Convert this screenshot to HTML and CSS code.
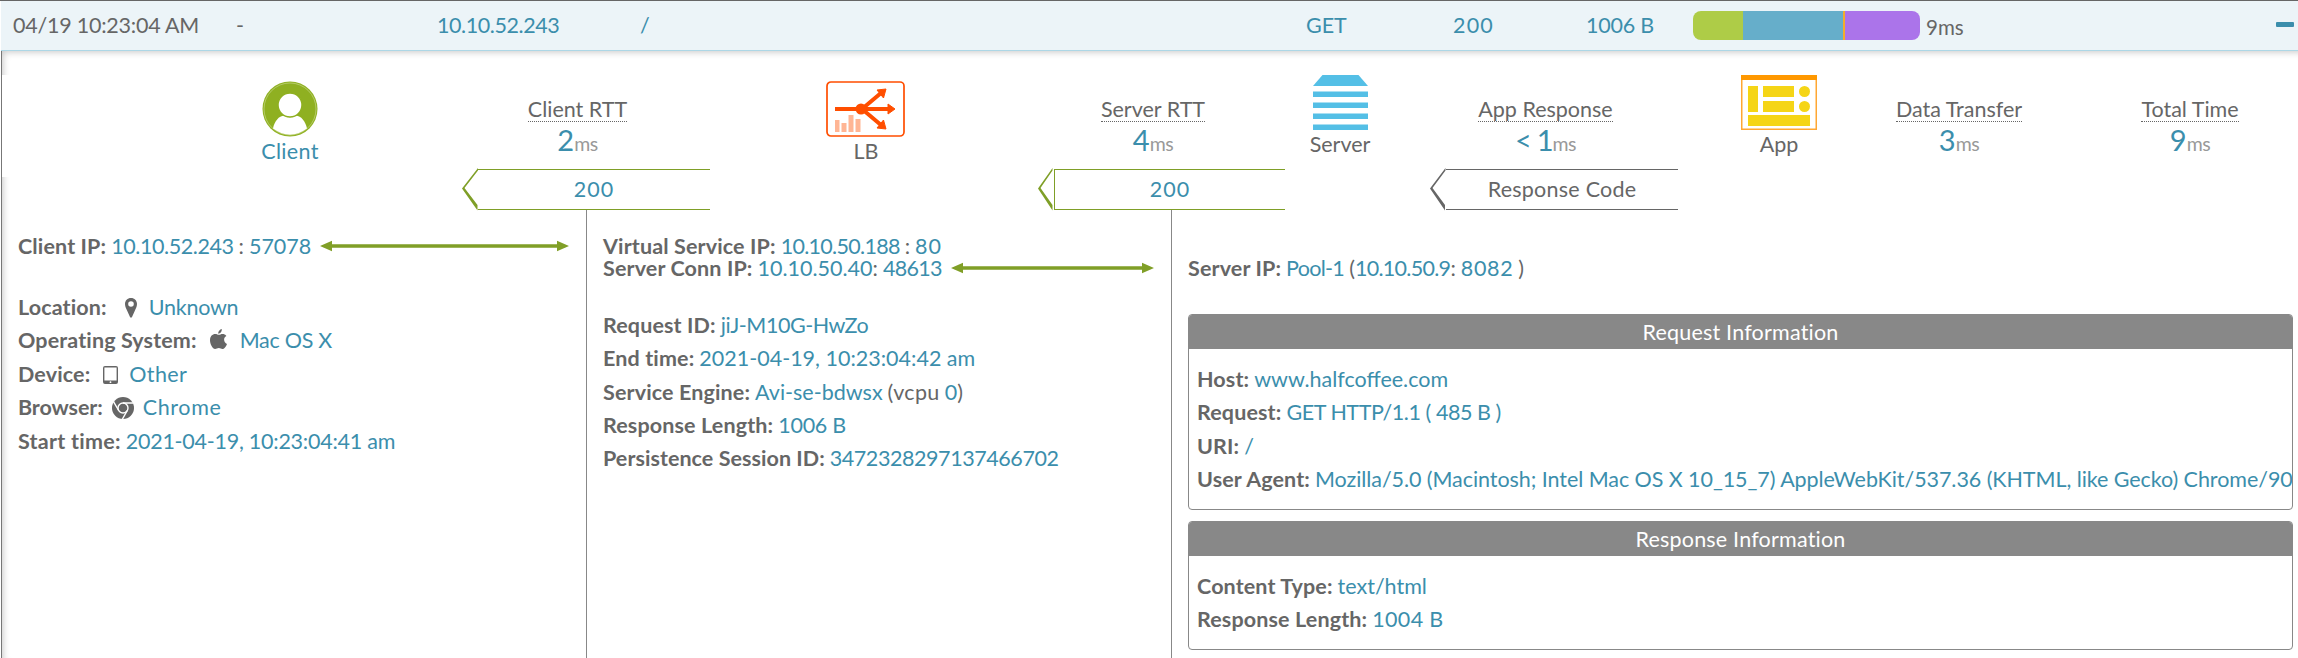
FILE: index.html
```html
<!DOCTYPE html>
<html lang="en">
<head>
<meta charset="utf-8">
<title>Transaction log</title>
<link rel="stylesheet" href="styles.css">
</head>
<body>
<div class="log">
  <header class="row">
    <span class="date">04/19 10:23:04 AM</span>
    <span class="plain">-</span>
    <span class="ip">10.10.52.243</span>
    <span>/</span>
    <span>GET</span>
    <span class="wide">200</span>
    <span class="tight">1006 B</span>
    <span class="timing">
      <span class="bar"><i class="seg client"></i><i class="seg server"></i><i class="seg app"></i><i class="seg data"></i></span>
      <span class="total">9ms</span>
    </span>
    <span class="collapse"></span>
  </header>

  <main class="panel">
    <section class="overview">
      <div class="node low">
        <svg width="56" height="56" viewBox="0 0 56 56"><circle cx="28" cy="28" r="27.5" fill="#8fb021"/><circle cx="28" cy="28" r="26" fill="none" stroke="#c3d584" stroke-width=".7"/><path d="M11 47.5C12.500 40 17 35 22 34.500Q28 38 34 34.500C39 35 43.500 40 45 47.500Q28 60 11 47.500Z" fill="#fff"/><circle cx="28" cy="24" r="12" fill="#fff" stroke="#8fb021" stroke-width="1.500"/></svg>
        <span class="name link wide3">Client</span>
      </div>
      <div class="hop">
        <span class="metric">Client RTT</span>
        <span class="value">2<small>ms</small></span>
        <div class="code"><svg width="16" height="43" viewBox="0 0 16 43"><path d="M16 0L0 20.500L15.500 42.500V37L2.500 20L16 2.500Z"/></svg><b>200</b></div>
      </div>
      <div class="node low lb">
        <svg width="80" height="56" viewBox="0 0 80 56"><rect x="1" y="1" width="77" height="54" rx="4" fill="#fff" stroke="#ff4e00" stroke-width="1.700"/><g fill="#ffb594"><path d="M9 39h4.500v12H9zM15.500 42h5v9h-5zM22.500 34h5v17h-5zM29.500 38h5v13h-5z"/></g><g stroke="#ff4e00" stroke-width="4" fill="none"><path d="M9 28h54M36 28L55 12M36 28L55 44"/></g><circle cx="35" cy="28" r="5.500" fill="#ff4e00"/><path d="M62 23L69 28L62 33ZM51 9L60 8L57.500 17ZM51 47L60 48L57.500 39Z" fill="#ff4e00" stroke="#ff4e00"/></svg>
        <span class="name">LB</span>
      </div>
      <div class="hop">
        <span class="metric">Server RTT</span>
        <span class="value">4<small>ms</small></span>
        <div class="code closed"><svg width="16" height="43" viewBox="0 0 16 43"><path d="M14.500 0L0 20.500L14.500 42.500V37L2.500 20L14.500 2.500Z"/></svg><b>200</b></div>
      </div>
      <div class="node server-node">
        <svg width="55" height="55" viewBox="0 0 55 55" fill="#54bfe6"><path d="M9.500 0h36L55 11H0z"/><path d="M0 16.500h55V22H0zM0 27.500h55V33H0zM0 38.500h55V44H0zM0 49.500h55V55H0z"/></svg>
        <span class="name">Server</span>
      </div>
      <div class="hop gray">
        <span class="metric">App Response</span>
        <span class="value app-time">&lt; 1<small>ms</small></span>
        <div class="code"><svg width="16" height="43" viewBox="0 0 16 43"><path d="M15.500 0L0 20.500L15 42.500V37L2.500 20L15.500 2.500Z"/></svg><b>Response Code</b></div>
      </div>
      <div class="node">
        <svg width="76" height="55" viewBox="0 0 76 55"><path d="M.75 0v54.250h74.500V0" fill="#fff" stroke="#ffa733" stroke-width="1.500"/><path d="M0 0h76v5H0z" fill="#ff9800"/><g fill="#f5d516"><path d="M7 11h10v26H7zM22 11h31v11H22zM22 26h31v11H22zM7 40h62v11H7z"/><circle cx="63.500" cy="16.500" r="5.500"/><circle cx="63.500" cy="31.500" r="5.500"/></g></svg>
        <span class="name">App</span>
      </div>
      <div class="hop plain-hop">
        <span class="metric">Data Transfer</span>
        <span class="value">3<small>ms</small></span>
      </div>
      <div class="hop plain-hop">
        <span class="metric">Total Time</span>
        <span class="value">9<small>ms</small></span>
      </div>
    </section>

    <section class="details">
      <div class="col">
        <p class="addr"><b>Client IP:</b><a class="ip">10.10.52.243</a><span>:</span><a>57078</a>
          <svg class="arrow" width="249" height="12" viewBox="0 0 249 12"><path d="M0 6L12 .800V4.200H237V.800L249 6L237 11.200V7.800H12V11.200Z"/></svg></p>
        <div class="fields first">
          <p><b>Location:</b><svg class="pin" width="12" height="20" viewBox="0 0 12 20"><path fill-rule="evenodd" d="M6 0C2.500 0 0 2.600 0 6C0 9 1.300 10.500 2.500 13.500L5 19Q6 20.500 7 19L9.500 13.500C10.700 10.500 12 9 12 6C12 2.600 9.500 0 6 0ZM6 3.200A2.800 2.800 0 1 1 6 8.800A2.800 2.800 0 1 1 6 3.200Z"/></svg><a class="tight">Unknown</a></p>
          <p><b>Operating System:</b><svg class="apple" width="17" height="20" viewBox="0 0 17 20"><path d="M11.800 0C12 2.600 10.200 4.700 8.200 4.700C8 2.400 9.800.400 11.800 0ZM14.100 10.600C14.100 8.600 15.400 7.500 16.400 6.900C15.400 5.500 13.900 5 12.600 5C11 5 9.900 5.800 8.900 5.800C8 5.800 6.700 5 5.200 5C2.500 5 0 7.200 0 11.200C0 15 2.600 20 5.100 20C6.500 20 7.200 19 8.900 19C10.500 19 11.100 20 12.500 20C14.500 20 16.200 17.200 17 15C15.300 14.300 14.100 12.700 14.100 10.600Z"/></svg><a class="tight">Mac OS X</a></p>
          <p><b>Device:</b><svg class="tablet" width="15" height="18" viewBox="0 0 15 18"><path fill-rule="evenodd" d="M2 0H13Q15 0 15 2V16Q15 18 13 18H2Q0 18 0 16V2Q0 0 2 0ZM1.400 1.600V14.500H13.600V1.600ZM7.500 15.300A.900.900 0 1 0 7.500 17.100A.900.900 0 1 0 7.500 15.300Z"/></svg><a class="wide3">Other</a></p>
          <p><b class="tight">Browser:</b><svg class="chrome" width="22" height="22" viewBox="0 0 22 22"><circle cx="11" cy="11" r="11"/><g fill="none" stroke="#fff" stroke-width="1.400"><circle cx="11" cy="11" r="5"/><path d="M11 6H21.500M6.700 13.500L1.500 4.700M15.300 13.500L10.200 22.500"/></g></svg><a class="wide5">Chrome</a></p>
          <p><b class="start">Start time:</b><a class="tight">2021-04-19, 10:23:04:41 am</a></p>
        </div>
      </div>
      <div class="col">
        <p class="addr"><b>Virtual Service IP:</b><a class="ip6">10.10.50.188</a><span>:</span><a class="pair">80</a></p>
        <p class="addr"><b>Server Conn IP:</b><a>10.10.50.40</a><span class="stick">:</span><a class="ip6">48613</a>
          <svg class="arrow" width="203" height="12" viewBox="0 0 203 12"><path d="M0 6L12 .800V4.200H191V.800L203 6L191 11.200V7.800H12V11.200Z"/></svg></p>
        <div class="fields second">
          <p><b>Request ID:</b><a class="ip">jiJ-M10G-HwZo</a></p>
          <p><b>End time:</b><a>2021-04-19, 10:23:04:42 am</a></p>
          <p><b>Service Engine:</b><a>Avi-se-bdwsx</a><span class="wide3">(vcpu</span><a>0</a><span class="close">)</span></p>
          <p><b>Response Length:</b><a class="tight">1006 B</a></p>
          <p><b class="session">Persistence Session ID:</b><a class="ip">3472328297137466702</a></p>
        </div>
      </div>
      <div class="col last">
        <p class="addr pool"><b>Server IP:</b><a class="ip6">Pool-1</a><span>(</span><a class="ip6 close">10.10.50.9</a><span class="close">:</span><a class="wide5">8082</a><span>)</span></p>
        <article class="box request">
          <h2>Request Information</h2>
          <p><b>Host:</b><a>www.halfcoffee.com</a></p>
          <p><b>Request:</b><a class="ip">GET HTTP/1.1 ( 485 B )</a></p>
          <p><b>URI:</b><a>/</a></p>
          <p><b>User Agent:</b><a class="agent">Mozilla/5.0 (Macintosh; Intel Mac OS X 10_15_7) AppleWebKit/537.36 (KHTML, like Gecko) Chrome/90</a></p>
        </article>
        <article class="box response">
          <h2>Response Information</h2>
          <p><b>Content Type:</b><a>text/html</a></p>
          <p><b>Response Length:</b><a class="wide3">1004 B</a></p>
        </article>
      </div>
    </section>
  </main>
</div>
</body>
</html>
```
FILE: styles.css
```css
* { box-sizing: border-box; }
body {
  margin: 0;
  background: #fff;
  color: #666;
  font: 21.5px/22px Lato, "Open Sans", sans-serif;
}
p, h2 { margin: 0; }
svg { display: block; flex: none; }
a { color: #3b8eac; }

.log {
  width: 2298px;
  height: 658px;
  overflow: hidden;
  border-top: 1px solid #666;
}

/* letter spacing steps */
.ip { letter-spacing: -.43px; }
.ip6 { letter-spacing: -.7px; }
.tight { letter-spacing: -.25px; }
.wide3 { letter-spacing: .35px; }
.wide5 { letter-spacing: .65px; }
.wide { letter-spacing: 1.2px; }
.pair { letter-spacing: .8px; }

/* summary row */
.row {
  position: relative;
  z-index: 1;
  display: grid;
  grid-template-columns: 223px 201px 203px 666px 147px 133px 107px 583px 18px;
  align-items: center;
  height: 50px;
  margin-left: 1px;
  padding: 0 0 2px 12px;
  background: #ecf4f8;
  border-bottom: 1px solid #add7e6;
  color: #3b8eac;
}
.date { color: #666; letter-spacing: -.23px; }
.plain { color: #666; }
.timing { display: flex; align-items: center; gap: 6px; padding-top: 2px; color: #666; }
.bar { display: flex; width: 227px; height: 29px; border-radius: 8px; overflow: hidden; }
.seg { flex: none; }
.seg.client { width: 50px; background: #aecc47; }
.seg.server { width: 100px; background: #66aeca; }
.seg.app { width: 2px; background: #f3ad2c; }
.seg.data { flex: 1; background: #ab74ea; }
.total { padding-top: 2px; font-size: 20.5px; }
.collapse { width: 18px; height: 5px; border-radius: 1px; background: #3b8eac; }

/* expanded panel */
.panel {
  margin-left: 1px;
  height: 607px;
  border-left: 1px solid #777;
  box-shadow: inset 4px 4px 7px -3px rgba(0, 0, 0, .22);
}
.overview {
  display: grid;
  grid-template-columns: 344px 248px 328px 247px 145px 248px 202px 158px 1fr;
  height: 159px;
  padding-left: 116px;
  background: linear-gradient(#fff, #fff) 0 24px / 100% 102px no-repeat;
}
.node { display: flex; flex-direction: column; align-items: center; padding-top: 24px; }
.node.low { padding-top: 30px; }
.node.lb { padding-right: 16px; }
.node.server-node { padding-right: 35px; }
.name { margin-top: 3px; }
.link { color: #3b8eac; }

.hop { display: flex; flex-direction: column; align-items: center; padding-top: 47px; color: #7f9f27; }
.metric {
  height: 24px;
  margin-right: 17px;
  color: #666;
  border-bottom: 1px dotted #666;
}
.value {
  display: flex;
  align-items: baseline;
  height: 30px;
  margin: 3px 17px 0 0;
  font-size: 29px;
  line-height: 30px;
  color: #3b8eac;
  white-space: pre;
}
.value small { font-size: 19.5px; letter-spacing: -.5px; color: #999; }
.app-time { letter-spacing: -1.2px; }
.code { display: flex; align-self: stretch; margin-top: 13px; }
.code svg { fill: currentColor; }
.code b {
  flex: 1;
  height: 41px;
  margin-top: 1px;
  border: solid currentColor;
  border-width: 1px 0;
  font-weight: 400;
  line-height: 38px;
  text-align: center;
  letter-spacing: 1px;
}
.code b::first-line { color: #3b8eac; }
.closed b { border-left-width: 1px; }
.gray { color: #666; }
.gray .code b { letter-spacing: .23px; }
.gray .code b::first-line { color: #666; }
.plain-hop .metric, .plain-hop .value { margin-right: 0; }
.plain-hop:last-child { padding: 47px 12px 0 0; margin-left: 56px; }

/* details */
.details { display: grid; grid-template-columns: 585px 585px 1fr; height: 448px; }
.col { padding: 25px 0 0 16px; border-right: 1px solid #888; overflow: hidden; }
.col.last { padding-right: 5px; border: 0; }
.col p { display: flex; align-items: baseline; gap: 5px; white-space: pre; }
.col b { letter-spacing: .13px; }
.col b.tight { letter-spacing: -.1px; }
.col b.start { letter-spacing: .25px; }
.col b.session { letter-spacing: .05px; }
.addr { height: 22px; }
.arrow { align-self: center; fill: #809f27; margin-left: 4px; }
.stick { margin-left: -5px; }
.col p .close { margin-left: -5px; }
.fields p { line-height: 33.4px; }
.first { margin-top: 34px; }
.second { margin-top: 29.7px; }
.fields svg { fill: #666; align-self: center; }
.pin { margin: 0 7px 0 13px; }
.apple { margin: 0 8px 4px; }
.tablet { margin: 0 6px 0 8px; }
.chrome { margin: 0 4px; }
.pool { margin-top: 22px; }

.box { border: 1px solid #888; border-radius: 4px; overflow: hidden; }
.box h2 {
  height: 34px;
  margin-bottom: 13.7px;
  background: #888;
  color: #fff;
  font: inherit;
  line-height: 34px;
  text-align: center;
  letter-spacing: .2px;
}
.box p { padding-left: 8px; line-height: 33.4px; }
.request { height: 196px; margin-top: 35px; }
.response { height: 129px; margin-top: 11px; }
.agent { letter-spacing: -.06px; }
```
